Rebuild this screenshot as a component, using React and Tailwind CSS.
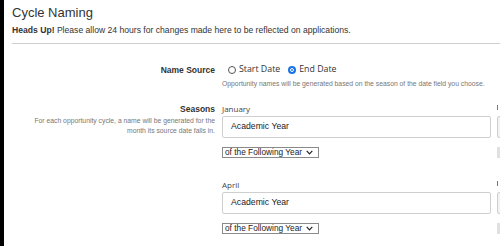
import React from "react";

function Chevron() {
  return (
    <svg width="7" height="5" viewBox="0 0 7 5" className="ml-[4px] shrink-0">
      <path d="M0.7 0.9 L3.5 3.8 L6.3 0.9" fill="none" stroke="#222" strokeWidth="1.2" />
    </svg>
  );
}

function SelectBox() {
  return (
    <div className="flex h-[11px] w-[97px] items-center whitespace-nowrap border border-[#8a8a8a] bg-white pl-[2px] text-[8.3px] leading-none text-[#222]">
      <span>of the Following Year</span>
      <Chevron />
    </div>
  );
}

function Season({ month }) {
  return (
    <div className="flex w-[269px] shrink-0 flex-col">
      <div className="h-[13px] text-[8px] leading-[12px] text-[#444] font-['Open_Sans',sans-serif]">{month}</div>
      <div className="flex h-[22px] items-center rounded-[2px] border border-[#cfcfcf] pl-[8px] text-[8.7px] text-[#222]">
        Academic Year
      </div>
      <div className="mt-[9px]">
        <SelectBox />
      </div>
    </div>
  );
}

function Edge() {
  return (
    <div className="flex w-[10px] shrink-0 flex-col">
      <div className="h-[13px]"><div className="mt-[2px] h-[5px] w-[1px] bg-[#777]" /></div>
      <div className="h-[22px] w-[4px] rounded-[2px] border border-[#cfcfcf] bg-[#f2f2f2]" />
      <div className="mt-[9px] h-[11px] w-[4px] bg-[#e0e0e0]" />
    </div>
  );
}

export default function App() {
  return (
    <div className="h-[246px] w-[500px] overflow-hidden border-l-4 border-black bg-white font-['Liberation_Sans',Arial,sans-serif]">
      <div className="pl-[8px]">
        <div className="pt-[5px] text-[13px] leading-[16px] text-[#333]">Cycle Naming</div>
        <div className="mt-[3px] whitespace-nowrap text-[8.6px] leading-[12px] text-[#333]">
          <b>Heads Up!</b> Please allow 24 hours for changes made here to be reflected on applications.
        </div>
        <div className="mt-[7px] border-t border-[#cfcfcf]" />

        <div className="mt-[20px] flex">
          <div className="w-[203px] shrink-0 text-right text-[8.5px] font-bold leading-[12px] text-[#333]">Name Source</div>
          <div className="ml-[7px] flex flex-col">
            <div className="flex h-[12px] items-center whitespace-nowrap text-[8.8px] text-[#333] font-['Open_Sans',sans-serif]">
              <span className="ml-[6px] h-[8px] w-[8px] shrink-0 rounded-full border border-[#555] bg-white" />
              <span className="ml-[3px]">Start Date</span>
              <span className="ml-[8px] flex h-[8px] w-[8px] shrink-0 items-center justify-center rounded-full bg-[#1a73e8]">
                <span className="h-[4px] w-[4px] rounded-full border border-white bg-[#1a73e8]" />
              </span>
              <span className="ml-[3px]">End Date</span>
            </div>
            <div className="mt-[3px] whitespace-nowrap text-[6.8px] leading-[9px] text-[#777]">
              Opportunity names will be generated based on the season of the date field you choose.
            </div>
          </div>
        </div>

        <div className="mt-[15px] flex">
          <div className="w-[203px] shrink-0 text-right">
            <div className="text-[8.5px] font-bold leading-[12px] text-[#333]">Seasons</div>
            <div className="mt-[1px] text-[6.8px] leading-[10px] text-[#777]">
              For each opportunity cycle, a name will be generated for the
              <br />
              month its source date falls in.
            </div>
          </div>
          <div className="ml-[7px] flex flex-col gap-[21px]">
            <div className="flex gap-[6px]">
              <Season month="January" />
              <Edge />
            </div>
            <div className="flex gap-[6px]">
              <Season month="April" />
              <Edge />
            </div>
          </div>
        </div>
      </div>
    </div>
  );
}
